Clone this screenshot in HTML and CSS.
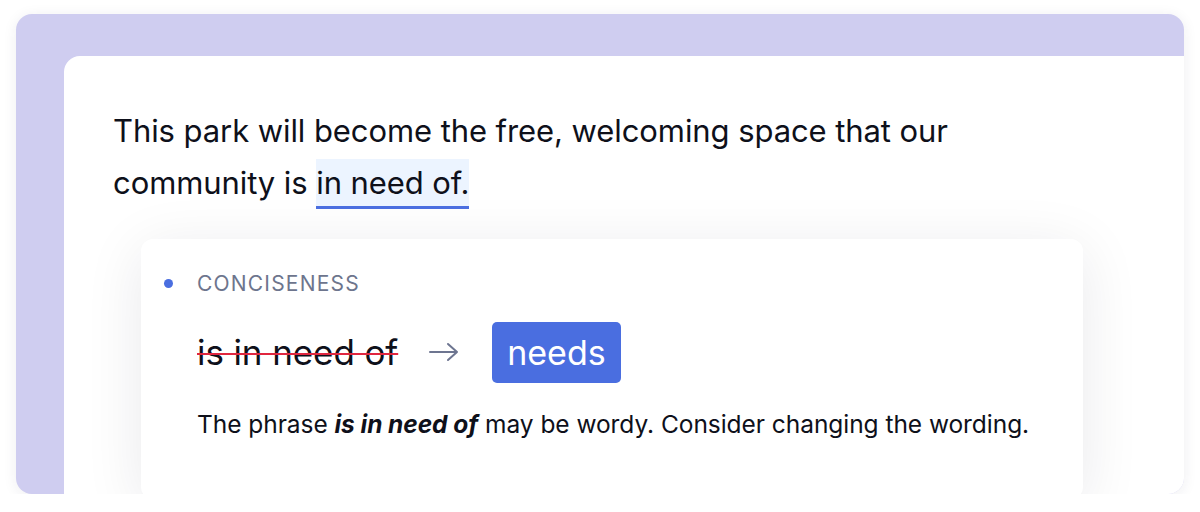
FILE: index.html
```html
<!DOCTYPE html>
<html lang="en">
<head>
<meta charset="utf-8">
<title>Conciseness suggestion</title>
<link rel="stylesheet" href="styles.css">
</head>
<body>
<div class="frame">
  <div class="panel">
    <p class="sentence">This park will become the free, welcoming space that our community is <span class="hl">in need of.</span></p>
    <div class="card">
      <div class="label"><span class="dot"></span><span class="label-text">CONCISENESS</span></div>
      <div class="change">
        <span class="old">is in need of</span>
        <svg class="arrow" width="30" height="20" viewBox="0 0 30 20" aria-hidden="true">
          <path d="M1 10 H28 M19 2 L28 10 L19 18" fill="none" stroke="#6d7590" stroke-width="2" stroke-linecap="round" stroke-linejoin="round"/>
        </svg>
        <span class="new">needs</span>
      </div>
      <p class="desc">The phrase <b><i>is in need of</i></b> may be wordy. Consider changing the wording.</p>
    </div>
  </div>
</div>
</body>
</html>
```

FILE: styles.css
```css
html, body {
  margin: 0;
  padding: 0;
  background: #ffffff;
}
body {
  font-family: Inter, "Noto Sans", "Liberation Sans", sans-serif;
  color: #0e101a;
  padding: 14px 16px 0 16px;
}
.frame {
  height: 480px;
  border-radius: 16px;
  background: #cfcdf0;
  box-shadow: 0 2px 14px rgba(40, 40, 80, 0.08);
  overflow: hidden;
  display: flex;
  flex-direction: column;
  padding: 42px 0 0 48px;
  box-sizing: border-box;
}
.panel {
  flex: 1;
  background: #ffffff;
  border-top-left-radius: 16px;
  padding: 49px 0 0 49px;
}
.sentence {
  margin: 0;
  font-size: 31px;
  line-height: 52px;
  letter-spacing: -0.08px;
  max-width: 900px;
}
.hl {
  display: inline-block;
  line-height: 47px;
  background: #ecf4ff;
  border-bottom: 3px solid #4a6ee0;
}
.card {
  margin: 30px 101px 0 28px;
  height: 260px;
  background: #ffffff;
  border-radius: 12px;
  box-shadow: 0 10px 60px rgba(20, 20, 40, 0.09);
  padding: 32px 0 0 56px;
  box-sizing: border-box;
}
.label {
  display: flex;
  align-items: center;
  height: 24px;
  position: relative;
}
.dot {
  position: absolute;
  left: -33px;
  top: 8px;
  width: 9px;
  height: 9px;
  border-radius: 50%;
  background: #4a6ee0;
}
.label-text {
  font-size: 21px;
  letter-spacing: 1.2px;
  color: #6d758d;
}
.change {
  display: flex;
  align-items: center;
  margin-top: 26px;
  height: 62px;
}
.old {
  font-size: 35px;
  letter-spacing: -0.1px;
  text-decoration: line-through;
  text-decoration-color: #e0263f;
  text-decoration-thickness: 2px;
}
.arrow {
  margin-left: 31px;
}
.new {
  margin-left: 33px;
  background: #4a6ee0;
  color: #ffffff;
  font-size: 34px;
  border-radius: 5px;
  padding: 0 15px;
  height: 61px;
  line-height: 61px;
}
.desc {
  margin: 26px 0 0 0;
  font-size: 24.5px;
  letter-spacing: -0.05px;
}
```
